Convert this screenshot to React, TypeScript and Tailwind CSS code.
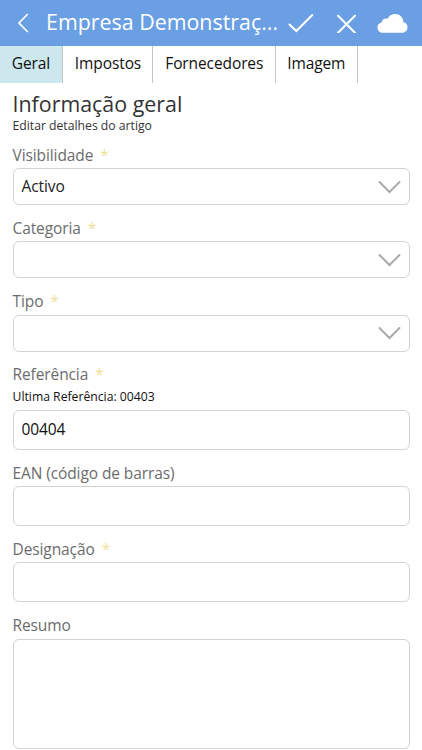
import React from 'react';

const box = 'w-full rounded-[6px] border border-[#d3d3d3] bg-white';

function Label({ text, required = false }: { text: string; required?: boolean }) {
  return (
    <label className="flex text-[15.5px] leading-[22px] tracking-[-0.1px] text-[#6c6c6c]">
      {text}
      {required && <span className="ml-[7px] text-[#f0e19a]">*</span>}
    </label>
  );
}

function SelectField({ label, value = '' }: { label: string; value?: string }) {
  return (
    <div className="flex h-[73.3px] flex-col">
      <Label text={label} required />
      <div className={`${box} mt-[2.5px] flex h-[37px] items-center justify-between pl-[8px] pr-[8px]`}>
        <span className="pb-[2px] text-[15.5px] leading-[22px] tracking-[-0.1px] text-[#222]">{value}</span>
        <svg width="23" height="14" viewBox="0 0 23 14" fill="none" stroke="#aaa" strokeWidth="2" strokeLinecap="round">
          <path d="M1.5 2 11.5 12 21.5 2" />
        </svg>
      </div>
    </div>
  );
}

function TextField({ label, required, hint, value = '' }: { label: string; required?: boolean; hint?: string; value?: string }) {
  return (
    <div className="mb-[12px] flex flex-col">
      <Label text={label} required={required} />
      {hint && <p className="pt-[1px] text-[12.2px] leading-[21px] text-[#111]">{hint}</p>}
      <input className={`${box} mt-[2.3px] h-[40px] px-[8px] pb-[2px] text-[15.5px] tracking-[-0.1px] text-[#111]`} defaultValue={value} />
    </div>
  );
}

const tabs = [
  { name: 'Geral', style: 'w-[63px] bg-[#cce7ed]' },
  { name: 'Impostos', style: 'w-[90px] pl-[1px]' },
  { name: 'Fornecedores', style: 'w-[122.5px] pl-[1px]' },
  { name: 'Imagem', style: 'w-[82.5px]' },
];

export default function App() {
  return (
    <div className="flex h-[750px] w-[422px] flex-col overflow-hidden bg-white font-['Open_Sans',sans-serif]">
      <header className="flex h-[46px] shrink-0 items-center bg-[#6aa0e3] text-white">
        <svg className="ml-[17px] shrink-0" width="12" height="20" viewBox="0 0 12 20" fill="none" stroke="currentColor" strokeWidth="1.7" strokeLinecap="round">
          <path d="M10.3 1.5 2 10l8.3 8.5" />
        </svg>
        <h1 className="ml-[17px] w-[241px] shrink-0 whitespace-nowrap pb-[3px] text-[21.4px] leading-[30px]">Empresa Demonstraç...</h1>
        <svg className="shrink-0" width="27" height="20" viewBox="0 0 27 20" fill="none" stroke="currentColor" strokeWidth="2" strokeLinecap="round">
          <path d="m2.5 11.5 6.8 6.5L25.3 2" />
        </svg>
        <svg className="ml-[22px] shrink-0" width="21" height="20" viewBox="0 0 21 20" fill="none" stroke="currentColor" strokeWidth="2" strokeLinecap="round">
          <path d="m2 2.8 17 17M19 2.8 2 19.8" />
        </svg>
        <svg className="ml-[20px] shrink-0" width="31" height="20" viewBox="0 0 31 20" fill="currentColor">
          <path d="M6.2 19.8C2.7 19.8.4 17.5.4 14.5c0-2.5 1.6-4.5 4.2-5.1.4-3 3.3-4.5 6-3.7C11.9 2.9 14.8 1 18 1c4.7 0 8.300 3.500 8.300 8 2.600.5 4.200 2.700 4.200 5.300 0 3.200-2.300 5.500-5.500 5.500Z" />
        </svg>
      </header>
      <nav className="flex h-[36.5px] shrink-0">
        {tabs.map((tab) => (
          <button key={tab.name} className={`${tab.style} shrink-0 border-r border-[#c4c4c4] pb-[2px] text-center text-[15.5px] tracking-[-0.1px] text-[#111]`}>
            {tab.name}
          </button>
        ))}
      </nav>
      <main className="flex flex-col pl-[12.5px] pr-[12.5px] pt-[6.5px]">
        <h2 className="text-[21.4px] leading-[30px] text-[#333]">Informação geral</h2>
        <p className="mb-[10.5px] text-[12.2px] leading-[14px] text-[#333]">Editar detalhes do artigo</p>
        <SelectField label="Visibilidade" value="Activo" />
        <SelectField label="Categoria" />
        <SelectField label="Tipo" />
        <TextField label="Referência" required hint="Ultima Referência: 00403" value="00404" />
        <TextField label="EAN (código de barras)" />
        <TextField label="Designação" required />
        <Label text="Resumo" />
        <textarea className={`${box} mt-[2.5px] h-[110px] resize-none`} />
      </main>
    </div>
  );
}
